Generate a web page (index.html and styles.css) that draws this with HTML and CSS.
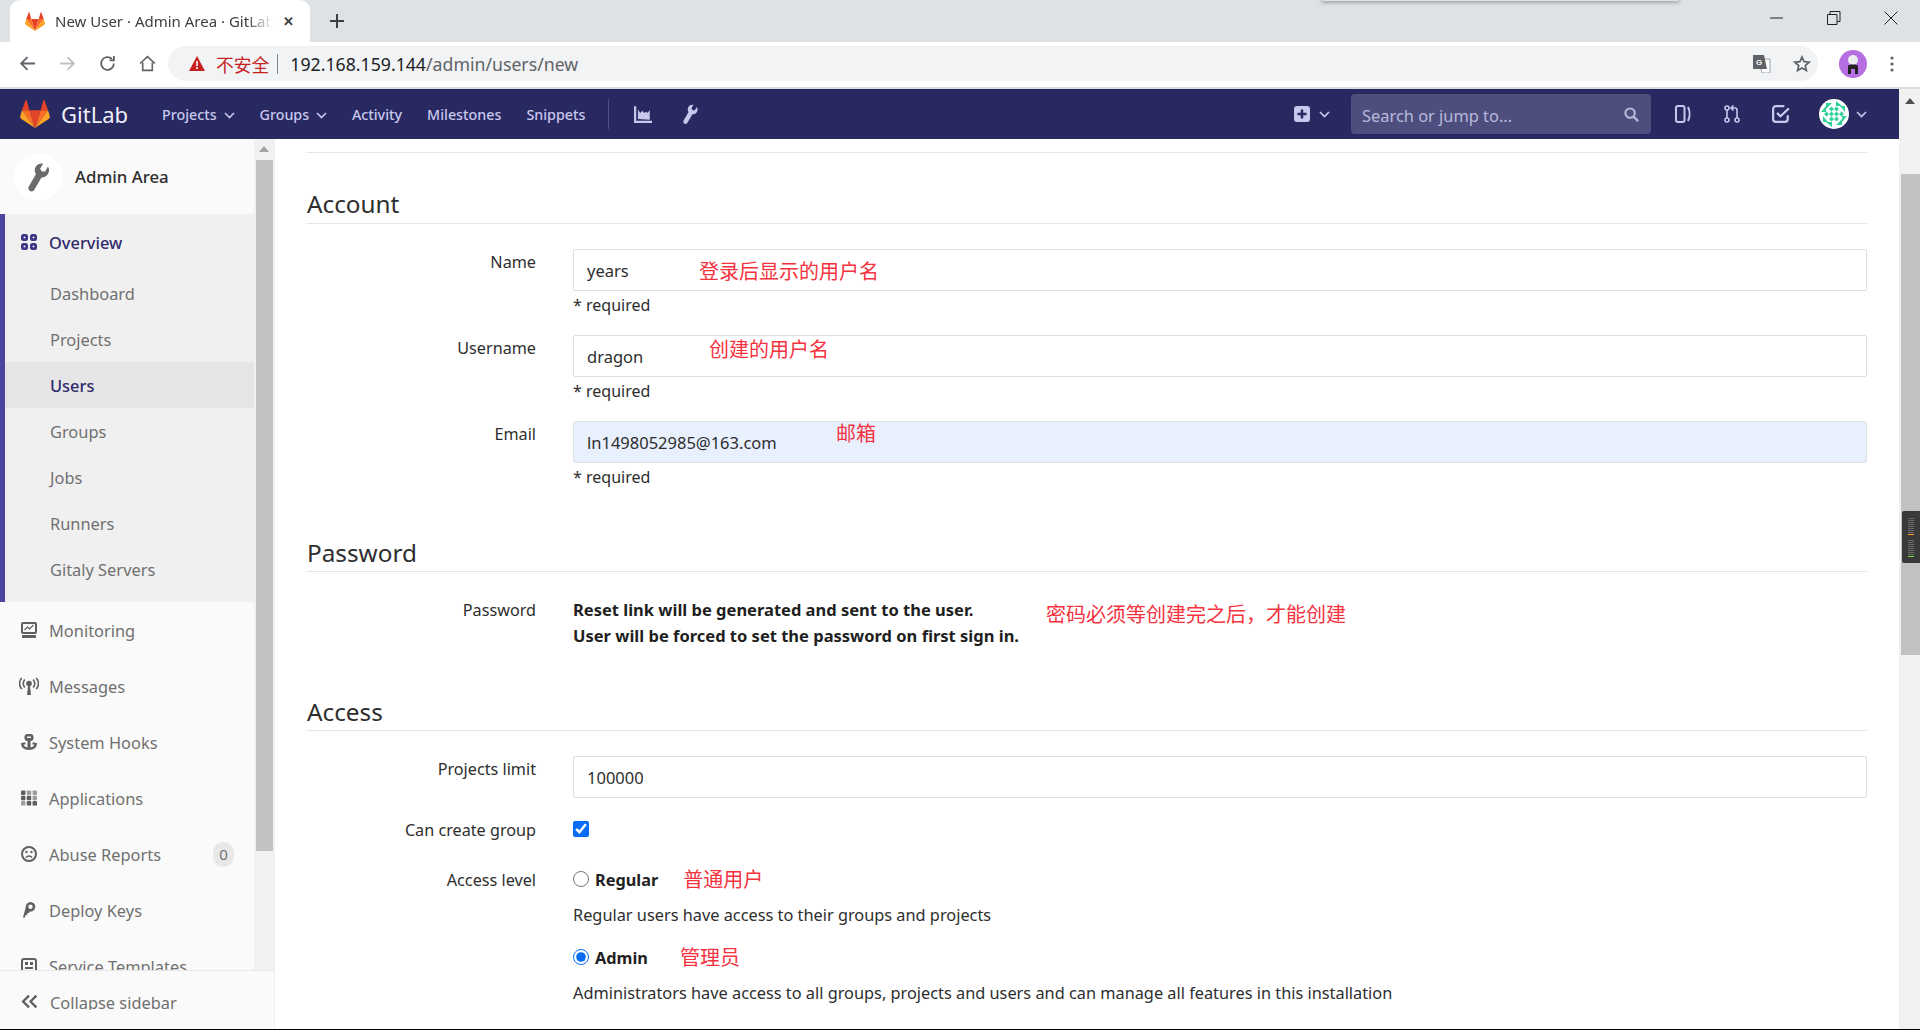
FILE: index.html
```html
<!DOCTYPE html>
<html>
<head>
  <meta charset="utf-8">
  <title>New User · Admin Area · GitLab</title>
  <link rel="stylesheet" href="styles.css">
</head>
<body>
  <svg class="defs" width="0" height="0">
    <symbol id="tanuki" viewBox="0 0 32 30">
      <polygon fill="#e24329" points="16,30 10,11 22,11"/>
      <polygon fill="#fc6d26" points="16,30 10,11 2,11"/>
      <polygon fill="#fc6d26" points="16,30 22,11 30,11"/>
      <polygon fill="#fca326" points="2,11 0,18 1,20 16,30"/>
      <polygon fill="#fca326" points="30,11 32,18 31,20 16,30"/>
      <polygon fill="#e24329" points="2,11 6,0 7,0 10,11"/>
      <polygon fill="#e24329" points="30,11 26,0 25,0 22,11"/>
    </symbol>
    <symbol id="chev" viewBox="0 0 11 7">
      <path d="M1 1l4.500 4.500L10 1" fill="none" stroke="currentColor" stroke-width="1.600"/>
    </symbol>
    <symbol id="wrench" viewBox="0 0 16 16">
      <path fill="currentColor" d="M15.600 3.400l-2.500 2.500-2-.5-.5-2L13.100.9C11.500 0 9.500.3 8.200 1.600 7 2.800 6.700 4.500 7.200 6L1 12.200c-.8.800-.8 2 0 2.800s2 .8 2.800 0L10 8.800c1.500.5 3.200.2 4.400-1 1.300-1.300 1.700-3 1.200-4.400z"/>
    </symbol>
  </svg>

  <div class="tabstrip">
    <div class="shadow-edge"></div>
    <div class="tab">
      <svg class="tab-icon"><use href="#tanuki"/></svg>
      <span class="tab-title">New User · Admin Area · GitLab</span>
      <span class="tab-close">✕</span>
    </div>
    <svg class="new-tab" viewBox="0 0 16 16"><path d="M8 1v14M1 8h14" stroke="#3c4043" stroke-width="2"/></svg>
    <div class="window-btns">
      <svg viewBox="0 0 14 14"><path d="M0 7h13" stroke="#222" stroke-width="1"/></svg>
      <svg viewBox="0 0 14 14"><path d="M.5 3.500h9.500v10H.5zM3 3.500V.5h10v10h-3" fill="none" stroke="#222"/></svg>
      <svg viewBox="0 0 14 14"><path d="M.5.5l13 13M13.500.5l-13 13" stroke="#222"/></svg>
    </div>
  </div>

  <div class="toolbar">
    <svg class="tool-icon" viewBox="0 0 16 16"><path d="M15 8H2M8 2L2 8l6 6" fill="none" stroke="#5f6368" stroke-width="1.700"/></svg>
    <svg class="tool-icon" viewBox="0 0 16 16"><path d="M1 8h13M8 2l6 6-6 6" fill="none" stroke="#bdc1c6" stroke-width="1.700"/></svg>
    <svg class="tool-icon" viewBox="0 0 16 16"><path d="M14 8a6 6 0 1 1-1.800-4.300M14 1v4h-4" fill="none" stroke="#5f6368" stroke-width="1.700"/></svg>
    <svg class="tool-icon" viewBox="0 0 16 16"><path d="M1 8l7-6.500L15 8M3.500 7v7.500h9V7" fill="none" stroke="#5f6368" stroke-width="1.500"/></svg>
    <div class="omnibox">
      <svg class="warn" viewBox="0 0 16 15"><path d="M8 0l8 15H0z" fill="#c5221f"/><path d="M8 5v5M8 11v2" stroke="#fff" stroke-width="1.600"/></svg>
      <span class="insecure">不安全</span>
      <span class="pipe"></span>
      <span class="url"><b>192.168.159.144</b>/admin/users/new</span>
      <svg class="translate" viewBox="0 0 18 18">
        <path d="M6 4h11v14H9z" fill="#fff" stroke="#9aa0a6"/>
        <path d="M0 0h11l3 14H0z" fill="#5f6368"/>
        <text x="3" y="10" font-size="8" font-weight="700" fill="#fff" font-family="Liberation Sans">G</text>
      </svg>
      <svg class="star" viewBox="0 0 18 18"><path d="M9 2l2.100 4.700 5 .5-3.800 3.400 1.100 5L9 13l-4.400 2.600 1.100-5L1.900 7.200l5-.5z" fill="none" stroke="#5f6368" stroke-width="1.700"/></svg>
    </div>
    <svg class="profile" viewBox="0 0 28 28">
      <circle cx="14" cy="14" r="14" fill="#b56fe0"/>
      <circle cx="14" cy="10" r="5" fill="#eee"/>
      <path d="M9 24v-8c0-2 10-2 10 0v8h-3v-5h-4v5z" fill="#222"/>
    </svg>
    <svg class="menu-dots" viewBox="0 0 4 16"><circle cx="2" cy="2" r="1.600" fill="#5f6368"/><circle cx="2" cy="8" r="1.600" fill="#5f6368"/><circle cx="2" cy="14" r="1.600" fill="#5f6368"/></svg>
  </div>

  <div class="viewport">
    <div class="app">
      <nav class="topnav">
        <svg class="logo"><use href="#tanuki"/></svg>
        <span class="brand">GitLab</span>
        <a class="nav-link">Projects <svg class="chev"><use href="#chev"/></svg></a>
        <a class="nav-link">Groups <svg class="chev"><use href="#chev"/></svg></a>
        <a class="nav-link">Activity</a>
        <a class="nav-link">Milestones</a>
        <a class="nav-link">Snippets</a>
        <span class="nav-divider"></span>
        <svg class="nav-icon chart-icon" viewBox="0 0 16 16"><path fill="currentColor" d="M0 1h2v13h14v2H0z"/><path fill="currentColor" d="M3.500 12.500V4l2 3 2-2 1.500 2 2-1 1 1 2-2.500v8.500z"/></svg>
        <svg class="nav-icon tilted"><use href="#wrench"/></svg>
        <div class="nav-right">
          <svg class="nav-plus" viewBox="0 0 16 16"><rect width="16" height="16" rx="3" fill="currentColor"/><path d="M8 3.500v9M3.500 8h9" stroke="#292961" stroke-width="2.500"/></svg>
          <svg class="chev"><use href="#chev"/></svg>
          <div class="search">
            <span>Search or jump to...</span>
            <svg viewBox="0 0 16 16"><circle cx="6.500" cy="6.500" r="5" fill="none" stroke="currentColor" stroke-width="2.200"/><path d="M10.500 10.500l4.500 4.500" stroke="currentColor" stroke-width="2.500"/></svg>
          </div>
          <svg class="nav-icon" viewBox="0 0 16 18"><rect x="1" y="1" width="8.500" height="16" rx="2" fill="none" stroke="currentColor" stroke-width="2"/><path d="M13 2c2 4 2 10 0 14" fill="none" stroke="currentColor" stroke-width="2"/></svg>
          <svg class="nav-icon" viewBox="0 0 16 18"><circle cx="3" cy="3" r="2" fill="none" stroke="currentColor" stroke-width="1.600"/><circle cx="3" cy="15" r="2" fill="none" stroke="currentColor" stroke-width="1.600"/><circle cx="13" cy="15" r="2" fill="none" stroke="currentColor" stroke-width="1.600"/><path d="M3 5v8M13 13V5c0-1-1-2-2-2H8M9.500 .5L7 3l2.500 2.500" fill="none" stroke="currentColor" stroke-width="1.600"/></svg>
          <svg class="nav-icon" viewBox="0 0 16 16"><path d="M14 9v3.500a2.500 2.500 0 0 1-2.500 2.500h-8A2.500 2.500 0 0 1 1 12.500v-9A2.500 2.500 0 0 1 3.500 1H11" fill="none" stroke="currentColor" stroke-width="2"/><path d="M4.500 7l3 3L15 3" fill="none" stroke="currentColor" stroke-width="2"/></svg>
          <svg class="avatar" viewBox="0 0 30 30">
            <circle cx="15" cy="15" r="15" fill="#fff"/>
            <g fill="#2fd39a">
              <path d="M12.500 7.500l2.500 2.500-2.500 2.500L10 10zM17.500 7.500L20 10l-2.500 2.500L15 10zM12.500 12.500L15 15l-2.500 2.500L10 15zM17.500 12.500L20 15l-2.500 2.500L15 15zM12.500 17.500L15 20l-2.500 2.500L10 20zM17.500 17.500L20 20l-2.500 2.500L15 20zM7.500 12.500L10 15l-2.500 2.500L5 15zM22.500 12.500L25 15l-2.500 2.500L20 15z"/>
              <path d="M7 4h6L7 10zM17 2l6 5h-6zM26 7v6l-5-6zM28 17l-5 6v-6zM23 26h-6l6-6zM13 28l-6-5h6zM4 23v-6l5 6zM2 13l5-6v6z"/>
            </g>
          </svg>
          <svg class="chev"><use href="#chev"/></svg>
        </div>
      </nav>

      <div class="page">
        <aside class="sidebar">
          <div class="sidebar-scroll">
            <div class="sidebar-inner">
              <div class="context">
                <span class="context-avatar"><svg><use href="#wrench"/></svg></span>
                <span class="context-name">Admin Area</span>
              </div>
              <ul class="menu">
                <li class="menu-group">
                  <a class="menu-head">
                    <svg class="menu-icon" viewBox="0 0 16 16">
                      <rect width="7" height="7" rx="2.500" fill="currentColor"/><rect x="9" width="7" height="7" rx="2.500" fill="currentColor"/><rect y="9" width="7" height="7" rx="2.500" fill="currentColor"/><rect x="9" y="9" width="7" height="7" rx="2.500" fill="currentColor"/>
                      <g fill="#f0f0f0"><circle cx="3.500" cy="3.500" r="1"/><circle cx="12.500" cy="3.500" r="1"/><circle cx="3.500" cy="12.500" r="1"/><circle cx="12.500" cy="12.500" r="1"/></g>
                    </svg>
                    Overview
                  </a>
                  <a class="sub-item">Dashboard</a>
                  <a class="sub-item">Projects</a>
                  <a class="sub-item current">Users</a>
                  <a class="sub-item">Groups</a>
                  <a class="sub-item">Jobs</a>
                  <a class="sub-item">Runners</a>
                  <a class="sub-item">Gitaly Servers</a>
                </li>
                <li class="menu-item">
                  <svg class="menu-icon" viewBox="0 0 16 16"><path fill="currentColor" d="M2 0h12a2 2 0 0 1 2 2v8a2 2 0 0 1-2 2H2a2 2 0 0 1-2-2V2a2 2 0 0 1 2-2zm0 2v8h12V2zM2 13h12a1 1 0 0 1 1 1v2H1v-2a1 1 0 0 1 1-1z"/><path d="M3.500 8l3-3 2 2 4-4" fill="none" stroke="currentColor" stroke-width="1.200"/></svg>
                  Monitoring
                </li>
                <li class="menu-item">
                  <svg class="menu-icon wide" viewBox="0 0 20 18"><circle cx="10" cy="6.500" r="2.800" fill="currentColor"/><path d="M8 18l1-9h2l1 9z" fill="currentColor"/><path d="M5.800 2.500c-2 2.500-2 5.500 0 8M14.200 2.500c2 2.500 2 5.500 0 8M2.800 1c-3 3-3 8 0 11M17.200 1c3 3 3 8 0 11" fill="none" stroke="currentColor" stroke-width="1.600"/></svg>
                  Messages
                </li>
                <li class="menu-item">
                  <svg class="menu-icon" viewBox="0 0 16 16"><rect x="3.500" width="9" height="7" rx="3" fill="currentColor"/><path d="M6 2.500h4v1.500H6z" fill="#fafafa"/><path d="M6.500 7h3v8h-3zM2 8.500h2.500v2H2zM11.500 8.500H14v2h-2.500z" fill="currentColor"/><path d="M1.200 9c0 3.800 2.800 5.800 6.800 5.800s6.800-2 6.800-5.800" fill="none" stroke="currentColor" stroke-width="2.400"/></svg>
                  System Hooks
                </li>
                <li class="menu-item">
                  <svg class="menu-icon" viewBox="0 0 18 17"><g fill="currentColor"><rect width="5" height="5" rx="1"/><rect x="6.500" width="5" height="5" rx="1" opacity=".6"/><rect x="13" width="5" height="5" rx="1" opacity=".6"/><rect y="6" width="5" height="5" rx="1"/><rect x="6.500" y="6" width="5" height="5" rx="1"/><rect x="13" y="6" width="5" height="5" rx="1" opacity=".6"/><rect y="12" width="5" height="5" rx="1" opacity=".6"/><rect x="6.500" y="12" width="5" height="5" rx="1"/><rect x="13" y="12" width="5" height="5" rx="1"/></g></svg>
                  Applications
                </li>
                <li class="menu-item">
                  <svg class="menu-icon" viewBox="0 0 16 16"><circle cx="8" cy="8" r="7" fill="none" stroke="currentColor" stroke-width="2"/><circle cx="5.500" cy="6" r="1.200" fill="currentColor"/><circle cx="10.500" cy="6" r="1.200" fill="currentColor"/><path d="M5 11.500c1.500-2 4.500-2 6 0" fill="none" stroke="currentColor" stroke-width="1.500"/></svg>
                  Abuse Reports
                  <span class="badge">0</span>
                </li>
                <li class="menu-item">
                  <svg class="menu-icon" viewBox="0 0 16 16"><path fill-rule="evenodd" fill="currentColor" d="M9.500 0a4.800 4.800 0 1 1 -1 9.500L8 11H6.500L6 13H4.500L4 15.500H2L4.800 5A4.800 4.800 0 0 1 9.500 0zm0 2.500a2.200 2.200 0 1 0 0 4.400 2.200 2.200 0 0 0 0-4.400z"/></svg>
                  Deploy Keys
                </li>
                <li class="menu-item">
                  <svg class="menu-icon" viewBox="0 0 16 16"><rect x="1" y="1" width="14" height="14" rx="2" fill="none" stroke="currentColor" stroke-width="2"/><path d="M4 4h3v3H4zM9 4h3v3H9zM4 9h8v2H4z" fill="currentColor"/></svg>
                  Service Templates
                </li>
              </ul>
            </div>
            <div class="side-scrollbar">
              <span class="arrow-up"></span>
              <span class="side-thumb"></span>
            </div>
          </div>
          <div class="collapse-bar">
            <svg viewBox="0 0 16 14"><path d="M7.500 1.500L2 7l5.500 5.500M14.500 1.500L9 7l5.500 5.500" fill="none" stroke="currentColor" stroke-width="2.200"/></svg>
            <span>Collapse sidebar</span>
          </div>
        </aside>

        <main class="content">
          <div class="top-rule"></div>

          <h4 class="section-title first">Account</h4>
          <div class="form-row first-row">
            <label>Name</label>
            <div class="field">
              <input class="text-input" type="text" value="years">
              <span class="note note-name">登录后显示的用户名</span>
              <p class="hint">* required</p>
            </div>
          </div>
          <div class="form-row">
            <label>Username</label>
            <div class="field">
              <input class="text-input" type="text" value="dragon">
              <span class="note note-username">创建的用户名</span>
              <p class="hint">* required</p>
            </div>
          </div>
          <div class="form-row">
            <label>Email</label>
            <div class="field">
              <input class="text-input autofilled" type="text" value="ln1498052985@163.com">
              <span class="note note-email">邮箱</span>
              <p class="hint">* required</p>
            </div>
          </div>

          <h4 class="section-title password">Password</h4>
          <div class="form-row first-row">
            <label>Password</label>
            <div class="field">
              <strong class="reset-text">Reset link will be generated and sent to the user.<br>User will be forced to set the password on first sign in.</strong>
              <span class="note note-password">密码必须等创建完之后，才能创建</span>
            </div>
          </div>

          <h4 class="section-title access">Access</h4>
          <div class="form-row first-row">
            <label>Projects limit</label>
            <div class="field">
              <input class="text-input" type="text" value="100000">
            </div>
          </div>
          <div class="form-row check-row">
            <label>Can create group</label>
            <div class="field">
              <input class="check" type="checkbox" checked>
            </div>
          </div>
          <div class="form-row level-row">
            <label>Access level</label>
            <div class="field">
              <div class="radio-line">
                <input class="check" type="radio" name="level">
                <b>Regular</b>
                <span class="radio-note regular-note">普通用户</span>
              </div>
              <p class="radio-help">Regular users have access to their groups and projects</p>
              <div class="radio-line admin-line">
                <input class="check" type="radio" name="level" checked>
                <b>Admin</b>
                <span class="radio-note admin-note">管理员</span>
              </div>
              <p class="radio-help">Administrators have access to all groups, projects and users and can manage all features in this installation</p>
            </div>
          </div>
        </main>
      </div>
    </div>

    <div class="page-scrollbar">
      <span class="arrow-up"></span>
      <span class="page-thumb"></span>
      <div class="widget">
        <i></i><i></i><i></i><i></i><i></i><i></i><i></i><i></i><i class="orange"></i>
        <i class="spaced"></i><i></i><i></i><i></i><i></i><i></i><i></i><i></i><i class="green"></i>
      </div>
    </div>
  </div>
</body>
</html>
```

FILE: styles.css
```css
* {
  box-sizing: border-box;
}

html, body {
  margin: 0;
  height: 1030px;
  overflow: hidden;
}

body {
  font-family: "Noto Sans", "Noto Sans CJK SC", sans-serif;
  font-size: 16px;
  color: #2e2e2e;
  background: #fff;
  border-bottom: 1px solid #000;
  display: flex;
  flex-direction: column;
}

.defs {
  position: absolute;
}

/* browser chrome */
.tabstrip {
  height: 42px;
  flex: none;
  background: #dee1e6;
  display: flex;
  align-items: flex-end;
  padding-left: 10px;
  position: relative;
}

.shadow-edge {
  position: absolute;
  left: 1323px;
  top: 0;
  width: 355px;
  height: 1px;
  box-shadow: 0 0 4px 1px rgba(0,0,0,0.45);
}

.tab {
  width: 300px;
  height: 42px;
  background: #fff;
  border-radius: 10px 10px 0 0;
  display: flex;
  align-items: center;
  padding-left: 15px;
  font-size: 15px;
  color: #3c4043;
}

.tab-icon {
  width: 20px;
  height: 19px;
  flex: none;
  margin-right: 10px;
}

.tab-title {
  width: 218px;
  white-space: nowrap;
  overflow: hidden;
  flex: none;
  mask-image: linear-gradient(to right, #000 88%, transparent);
}

.tab-close {
  margin-left: 10px;
  font-size: 13px;
  font-weight: 700;
  color: #3c4043;
}

.new-tab {
  width: 16px;
  height: 16px;
  margin: 0 0 13px 19px;
}

.window-btns {
  position: absolute;
  right: 22px;
  top: 11px;
  display: flex;
  gap: 43px;
}

.window-btns svg {
  width: 14px;
  height: 14px;
}

.toolbar {
  height: 47px;
  flex: none;
  background: #fff;
  border-bottom: 2px solid #dadce0;
  display: flex;
  align-items: center;
  padding: 0 0 2px 19px;
}

.tool-icon {
  width: 17px;
  height: 17px;
  margin-right: 23px;
}

.omnibox {
  width: 1650px;
  height: 35px;
  margin-left: -11px;
  background: #f1f3f4;
  border-radius: 18px;
  display: flex;
  align-items: center;
  padding-left: 15px;
}

.warn {
  width: 16px;
  height: 15px;
  margin: 0 11px 0 6px;
}

.insecure {
  color: #c5221f;
  font-size: 17.800px;
}

.pipe {
  width: 1px;
  height: 20px;
  background: #80868b;
  margin: 0 12px 0 8px;
}

.url {
  font-size: 17.700px;
  color: #5f6368;
  white-space: nowrap;
}

.url b {
  font-weight: 400;
  color: #202124;
}

.translate {
  width: 18px;
  height: 18px;
  margin-left: auto;
}

.star {
  width: 18px;
  height: 18px;
  margin: 0 7px 0 22px;
}

.profile {
  width: 28px;
  height: 28px;
  margin-left: 21px;
}

.menu-dots {
  width: 4px;
  height: 16px;
  margin-left: 23px;
}

.viewport {
  flex: 1;
  min-height: 0;
  display: flex;
}

.app {
  flex: 1;
  min-width: 0;
  display: flex;
  flex-direction: column;
}

/* gitlab nav */
.topnav {
  height: 50px;
  flex: none;
  background: #292961;
  color: #c8c8ee;
  display: flex;
  align-items: center;
  padding-left: 20px;
}

.logo {
  width: 30px;
  height: 28px;
  flex: none;
}

.brand {
  color: #f0f0fa;
  font-size: 22px;
  margin: 0 34px 0 11px;
}

.nav-link {
  font-size: 14.300px;
  font-weight: 500;
  margin-right: 25px;
  white-space: nowrap;
}

.chev {
  width: 11px;
  height: 7px;
  margin-left: 3px;
  vertical-align: middle;
}

.nav-divider {
  width: 1px;
  height: 30px;
  background: #4e4e85;
  margin: 0 25px 0 -2px;
}

.nav-icon {
  width: 18px;
  height: 18px;
  margin-right: 31px;
  flex: none;
}

.nav-icon.chart-icon {
  margin-right: 29px;
}

.nav-icon.tilted {
  transform: rotate(-15deg);
}

.nav-right {
  margin-left: auto;
  display: flex;
  align-items: center;
  padding-right: 32px;
}

.nav-plus {
  width: 16px;
  height: 16px;
}

.nav-right .chev {
  margin-left: 9px;
}

.search {
  width: 300px;
  height: 40px;
  background: #4e4e7e;
  border-radius: 4px;
  margin: 0 23px 0 21px;
  display: flex;
  align-items: center;
  justify-content: space-between;
  padding: 0 12px 0 11px;
  font-size: 16.400px;
  color: #b9b9dc;
}

.search span {
  padding-top: 2px;
}

.search svg {
  width: 15px;
  height: 15px;
}

.avatar {
  width: 30px;
  height: 30px;
  margin-left: -2px;
}

.nav-right .avatar + .chev {
  margin-left: 7px;
}

.page {
  flex: 1;
  min-height: 0;
  display: flex;
}

/* sidebar */
.sidebar {
  width: 275px;
  flex: none;
  background: #fafafa;
  border-right: 1px solid #f0f0f0;
  display: flex;
  flex-direction: column;
  color: #707070;
  font-size: 16.400px;
}

.sidebar-scroll {
  flex: 1;
  min-height: 0;
  display: flex;
  overflow: hidden;
}

.sidebar-inner {
  width: 254px;
  flex: none;
}

.context {
  height: 75px;
  display: flex;
  align-items: center;
  padding-left: 14px;
}

.context-avatar {
  width: 48px;
  height: 48px;
  background: #fff;
  border-radius: 50%;
  display: flex;
  align-items: center;
  justify-content: center;
  color: #6b6b6b;
  margin-right: 13px;
}

.context-avatar svg {
  width: 26px;
  height: 26px;
  transform: rotate(-15deg);
}

.context-name {
  color: #2e2e2e;
  font-size: 16.800px;
  font-weight: 500;
}

.menu {
  list-style: none;
  margin: 0;
  padding: 0;
}

.menu-group {
  background: #f0f0f0;
  border-left: 5px solid #4b45a0;
  padding-bottom: 10px;
}

.menu-head {
  height: 56px;
  display: flex;
  align-items: center;
  padding-left: 16px;
  color: #2f2a6b;
  font-weight: 500;
}

.menu-head .menu-icon {
  color: #3a3585;
}

.sub-item {
  display: flex;
  align-items: center;
  height: 46px;
  padding-left: 45px;
}

.sub-item.current {
  background: #e6e6e6;
  color: #2f2a6b;
  font-weight: 500;
}

.menu-item {
  height: 56px;
  display: flex;
  align-items: center;
  padding-left: 21px;
}

.menu-icon {
  width: 16px;
  height: 16px;
  flex: none;
  margin-right: 12px;
  color: #5f5f5f;
}

.menu-icon.wide {
  width: 20px;
  height: 18px;
  margin: 0 10px 0 -2px;
}

.badge {
  margin-left: auto;
  margin-right: 20px;
  width: 21px;
  height: 25px;
  border-radius: 11px;
  background: #e8e8e8;
  display: flex;
  align-items: center;
  justify-content: center;
  font-size: 15px;
}

.side-scrollbar {
  width: 20px;
  flex: none;
  background: #f1f1f1;
  position: relative;
  padding-top: 7px;
}

.arrow-up {
  display: block;
  width: 0;
  height: 0;
  margin: 0 auto;
  border-left: 5px solid transparent;
  border-right: 5px solid transparent;
  border-bottom: 6px solid #a3a3a3;
}

.side-thumb {
  position: absolute;
  left: 2px;
  top: 21px;
  width: 17px;
  height: 691px;
  background: #c1c1c1;
}

.collapse-bar {
  height: 59px;
  flex: none;
  border-top: 1px solid #e8e8e8;
  display: flex;
  align-items: center;
  padding: 0 0 0 21px;
  color: #707070;
}

.collapse-bar svg {
  width: 17px;
  height: 15px;
  margin-right: 12px;
  color: #5f5f5f;
  margin-top: 3px;
}

.collapse-bar span {
  height: 16px;
  overflow: hidden;
  line-height: 18px;
  margin-top: 4px;
}

/* form */
.content {
  flex: 1;
  min-width: 0;
  padding: 13px 32px 0;
}

.top-rule {
  border-top: 1px solid #e5e5e5;
  height: 1px;
}

.section-title {
  margin: 0;
  font-size: 24.300px;
  font-weight: 400;
  line-height: 30px;
  padding-bottom: 4px;
  border-bottom: 1px solid #e5e5e5;
  color: #2e2e2e;
}

.section-title.first {
  margin-top: 36px;
}

.section-title.password {
  margin-top: 49px;
  padding: 1px 0 3px;
}

.section-title.access {
  margin-top: 47px;
  padding: 1px 0 3px;
}

.form-row {
  display: grid;
  grid-template-columns: 229px 1fr;
  column-gap: 37px;
  margin-top: 19px;
}

.form-row.first-row {
  margin-top: 25px;
}

.form-row.check-row {
  margin-top: 19px;
}

.form-row.level-row {
  margin-top: 24px;
}

.form-row label {
  text-align: right;
  line-height: 26px;
  font-size: 16.200px;
  color: #2e2e2e;
}

.field {
  position: relative;
}

.text-input {
  display: block;
  width: 100%;
  height: 42px;
  padding: 0 13px;
  border: 1px solid #dfdfdf;
  border-radius: 2px;
  background: #fff;
  font: inherit;
  font-size: 16.500px;
  color: #2e2e2e;
}

.text-input.autofilled {
  background: #e8f0fe;
}

.hint {
  margin: 3px 0 0;
  line-height: 22px;
  color: #2e2e2e;
}

.note, .radio-note {
  color: #f5333f;
  font-size: 20px;
  font-weight: 400;
  white-space: nowrap;
  line-height: 28px;
}

.note {
  position: absolute;
}

.note-name {
  left: 126px;
  top: 9px;
}

.note-username {
  left: 136px;
  top: 1px;
}

.note-email {
  left: 263px;
  top: -1px;
}

.note-password {
  left: 473px;
  top: 4px;
}

.reset-text {
  display: block;
  line-height: 26px;
  font-weight: 700;
  color: #1f1f1f;
  font-size: 16.500px;
}

.check {
  width: 16px;
  height: 16px;
  margin: 4px 0 0;
  accent-color: #0a6ef5;
  flex: none;
}

.radio-line {
  display: flex;
  align-items: flex-start;
  height: 26px;
  line-height: 26px;
  font-size: 16.300px;
}

.radio-line b {
  margin-left: 6px;
  color: #1f1f1f;
}

.radio-note {
  line-height: 26px;
}

.regular-note {
  margin-left: 25px;
}

.admin-note {
  margin-left: 32px;
}

.radio-help {
  margin: 9px 0 0;
  line-height: 26px;
  font-size: 16.320px;
  color: #2e2e2e;
}

.admin-line {
  margin-top: 17px;
}

/* page scrollbar */
.page-scrollbar {
  width: 21px;
  flex: none;
  background: #f1f1f1;
  position: relative;
  padding-top: 9px;
}

.page-thumb {
  position: absolute;
  left: 2px;
  right: 0;
  top: 85px;
  height: 481px;
  background: #c1c1c1;
}

.page-scrollbar .arrow-up {
  border-bottom-color: #505050;
}

.widget {
  position: absolute;
  left: 3px;
  right: 0;
  top: 422px;
  height: 52px;
  background: #3a3a3a;
  border-radius: 2px 0 0 2px;
  padding: 7px 0 0 6px;
  display: flex;
  flex-direction: column;
}

.widget i {
  display: block;
  width: 6px;
  height: 1px;
  background: #6a6a6a;
  margin-bottom: 1px;
  flex: none;
}

.widget i.spaced {
  margin-top: 4px;
}

.widget i.orange {
  background: #ff9c1a;
}

.widget i.green {
  background: #6fdc3c;
}
```
